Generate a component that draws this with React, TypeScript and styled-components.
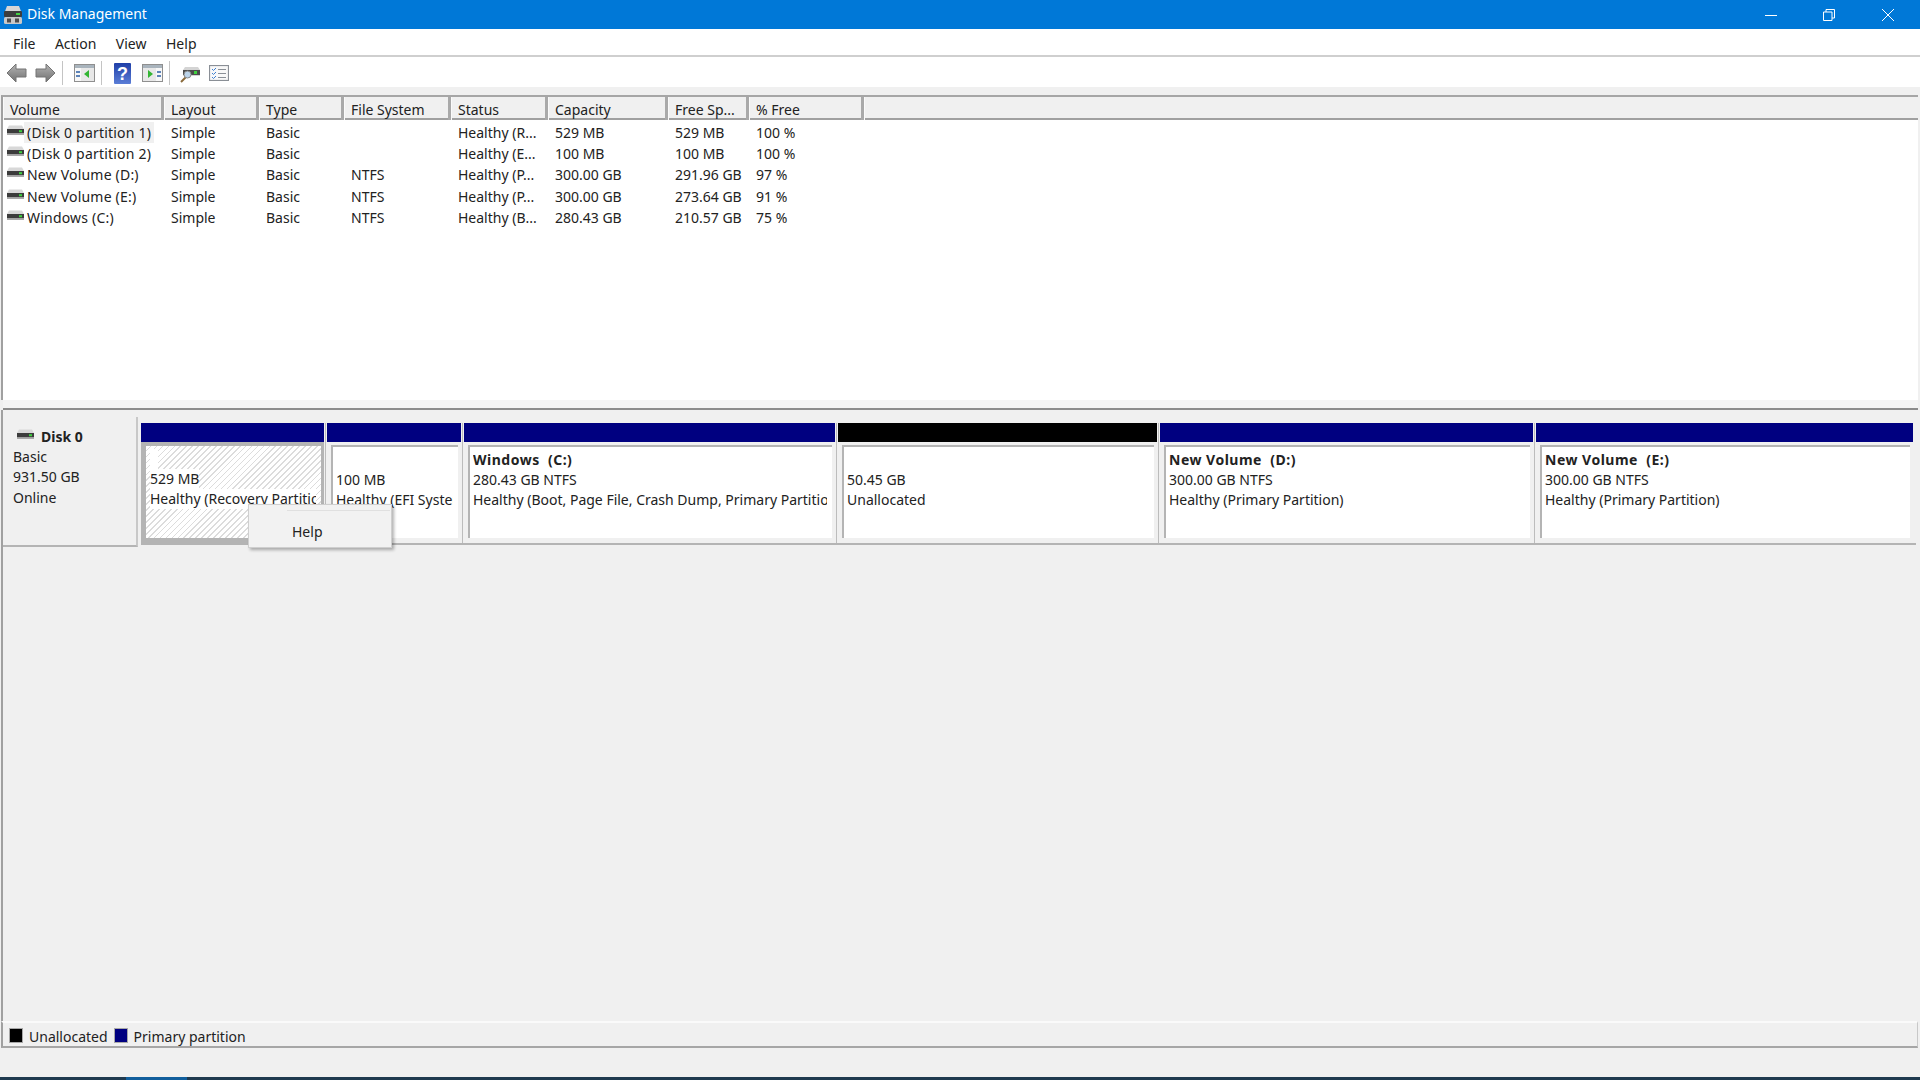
import styled, { createGlobalStyle } from "styled-components";

const GlobalStyle = createGlobalStyle`
  html, body {
    margin: 0;
    padding: 0;
    height: 100%;
    overflow: hidden;
    background: #f0f0f0;
  }
  #root {
    height: 100%;
  }
  * {
    box-sizing: border-box;
  }
`;

const Page = styled.div`
  display: flex;
  flex-direction: column;
  width: 1920px;
  height: 1080px;
  font-family: "Noto Sans", "Open Sans", sans-serif;
  font-size: 14px;
  color: #222;
  background: #f0f0f0;
`;

const TitleBar = styled.div`
  display: flex;
  align-items: center;
  height: 29px;
  flex: none;
  padding: 0 3px 0 3px;
  background: #0078d7;
  color: #fff;
  font-size: 14px;
`;

const TitleText = styled.span`
  flex: 1;
  margin: -2px 0 0 4px;
`;

const WindowButton = styled.div`
  display: flex;
  align-items: center;
  justify-content: center;
  width: 58.5px;
  height: 29px;
`;

const MenuBar = styled.div`
  display: flex;
  align-items: center;
  gap: 19.5px;
  height: 28px;
  flex: none;
  padding: 3px 0 0 13px;
  background: #fff;
  border-bottom: 2px solid #cfcfcf;
`;

const MenuItem = styled.span`
  color: #222;
`;

const Toolbar = styled.div`
  display: flex;
  align-items: center;
  height: 30px;
  flex: none;
  padding: 2px 0 0 6px;
  background: #fff;
`;

const ToolIcon = styled.div<{ $mr: number }>`
  display: flex;
  margin-right: ${(p) => p.$mr}px;
`;

const ToolSep = styled.div<{ $mr: number }>`
  width: 1px;
  height: 24px;
  background: #c4c4c4;
  margin-right: ${(p) => p.$mr}px;
`;

const ToolGap = styled.div`
  height: 8px;
  flex: none;
  background: #f0f0f0;
`;

const ListPane = styled.div`
  height: 305px;
  flex: none;
  margin-left: 1px;
  margin-right: 2px;
  background: #fff;
  border-top: 2px solid #a6a6a6;
  border-left: 2px solid #a0a0a0;
`;

const columns = "161px 95px 85px 107px 97px 120px 81px 115px 1fr";

const HeaderRow = styled.div`
  display: grid;
  grid-template-columns: ${columns};
  height: 23px;
  background: #f0f0f0;
  border-bottom: 2px solid #a0a0a0;
`;

const HeaderCell = styled.div`
  padding: 3px 0 0 6px;
  line-height: 20px;
  border-right: 3px solid #a9a9a9;
  border-left: 1px solid #fafafa;
  white-space: nowrap;
`;

const HeaderFill = styled.div`
  border-left: 1px solid #fafafa;
`;

const Rows = styled.div`
  padding-top: 2px;
`;

const Row = styled.div`
  display: grid;
  grid-template-columns: ${columns};
  height: 21.2px;
  line-height: 21px;
`;

const Cell = styled.div`
  padding-left: 7px;
  white-space: nowrap;
  overflow: hidden;
`;

const VolumeCell = styled.div`
  display: flex;
  align-items: center;
  padding-left: 4px;
  white-space: nowrap;
`;

const VolumeName = styled.span<{ $selected?: boolean }>`
  padding: 0 3px 0 3px;
  height: 21px;
  letter-spacing: 0.2px;
  background: ${(p) => (p.$selected ? "#f0f0f0" : "transparent")};
`;

const RowIcon = styled.div`
  display: flex;
  margin-top: -4px;
`;

const Splitter = styled.div`
  height: 10px;
  flex: none;
  margin-left: 3px;
  margin-right: 2px;
  background: #f4f4f4;
  border-bottom: 2px solid #8c8c8c;
`;

const DiskPane = styled.div`
  position: relative;
  display: flex;
  align-items: flex-start;
  flex: 1;
  margin-left: 1px;
  padding: 7px 4px 0 0;
  border-left: 2px solid #a0a0a0;
`;

const DiskLabel = styled.div`
  display: flex;
  flex-direction: column;
  width: 135px;
  height: 130px;
  flex: none;
  padding: 10px 0 0 10px;
  line-height: 20.2px;
  background: #f0f0f0;
  border-right: 2px solid #c8c8c8;
  border-bottom: 2px solid #b4b4b4;
`;

const DiskName = styled.div`
  display: flex;
  align-items: center;
  gap: 7px;
  margin-left: 4px;
  font-weight: 700;
`;

const DiskIconSlot = styled.div`
  display: flex;
  margin-top: -5px;
`;

const Partitions = styled.div`
  display: flex;
  flex: 1;
  height: 122px;
  margin: 6px 0 0 3px;
  border-bottom: 2px solid #b4b4b4;
`;

const Partition = styled.div<{ $w: number }>`
  display: flex;
  flex-direction: column;
  width: ${(p) => p.$w}px;
  flex: none;
  margin-right: 3px;
  position: relative;
  &:after {
    content: "";
    position: absolute;
    top: 0;
    bottom: 0;
    right: -2px;
    width: 1px;
    background: #bcbcbc;
  }
  &:last-child:after {
    right: -1px;
    background: transparent;
  }
`;

const Bar = styled.div<{ $color: string }>`
  height: 19px;
  flex: none;
  background: ${(p) => p.$color};
`;

const BoxFrame = styled.div<{ $selected?: boolean }>`
  display: flex;
  flex: 1;
  padding: ${(p) => (p.$selected ? "4px 3px 5px 5px" : "3px 3px 5px 4px")};
  background: ${(p) => (p.$selected ? "#b4b4b4" : "#f0f0f0")};
`;

const Box = styled.div<{ $selected?: boolean }>`
  flex: 1;
  min-width: 0;
  padding: ${(p) => (p.$selected ? "3px 5px 0 4px" : "3px 5px 0 3px")};
  line-height: 20px;
  overflow: hidden;
  white-space: pre;
  background: ${(p) =>
    p.$selected
      ? "repeating-linear-gradient(135deg, #fff 0 3px, #dcdcdc 3px 4.2px)"
      : "#fff"};
  border-top: ${(p) => (p.$selected ? "0" : "2px solid #b4b4b4")};
  border-left: ${(p) => (p.$selected ? "0" : "2px solid #b4b4b4")};
`;

const BoxLine = styled.div<{ $bold?: boolean; $hatched?: boolean }>`
  height: 20px;
  overflow: hidden;
  font-weight: ${(p) => (p.$bold ? 700 : 400)};
  letter-spacing: ${(p) => (p.$bold ? "0.5px" : "0")};
  & > span {
    display: inline-block;
    min-width: 8px;
    background: ${(p) => (p.$hatched ? "#fff" : "transparent")};
  }
`;

const ContextMenu = styled.div`
  position: absolute;
  left: 245px;
  top: 94px;
  display: flex;
  width: 144px;
  height: 44px;
  background: #f2f2f2;
  border: 1px solid #cfcfcf;
  box-shadow: 2px 2px 3px rgba(0, 0, 0, 0.3);
`;

const MenuGutter = styled.div`
  width: 38px;
  flex: none;
`;

const MenuLabel = styled.div`
  flex: 1;
  margin: 5px 1px 0 0;
  padding: 11px 0 0 5px;
  line-height: 20px;
  border-top: 1px solid #e0e0e0;
`;

const Legend = styled.div`
  display: flex;
  align-items: center;
  height: 27px;
  flex: none;
  margin: 0 2px 0 1px;
  padding: 1px 0 0 6px;
  background: #f0f0f0;
  border-top: 2px solid #fafafa;
  border-left: 2px solid #a0a0a0;
  border-bottom: 2px solid #a6a6a6;
  border-right: 1px solid #c8c8c8;
`;

const Swatch = styled.div<{ $color: string }>`
  width: 14px;
  height: 15px;
  background: ${(p) => p.$color};
  border: 1px solid #a8a8a8;
`;

const LegendText = styled.span<{ $mr: number }>`
  margin: 3px ${(p) => p.$mr}px 0 6px;
`;

const StatusBar = styled.div`
  height: 29px;
  flex: none;
  background: #f0f0f0;
`;

const Taskbar = styled.div`
  display: flex;
  height: 3px;
  flex: none;
  background: #1f3a4f;
`;

const TaskbarTab = styled.div`
  width: 61px;
  margin-left: 126px;
  background: #115e9c;
`;

type VolumeRow = {
  name: string;
  fs: string;
  status: string;
  capacity: string;
  free: string;
  pct: string;
};

const headers = [
  "Volume",
  "Layout",
  "Type",
  "File System",
  "Status",
  "Capacity",
  "Free Sp...",
  "% Free",
];

const rows: VolumeRow[] = [
  { name: "(Disk 0 partition 1)", fs: "", status: "Healthy (R...", capacity: "529 MB", free: "529 MB", pct: "100 %" },
  { name: "(Disk 0 partition 2)", fs: "", status: "Healthy (E...", capacity: "100 MB", free: "100 MB", pct: "100 %" },
  { name: "New Volume (D:)", fs: "NTFS", status: "Healthy (P...", capacity: "300.00 GB", free: "291.96 GB", pct: "97 %" },
  { name: "New Volume (E:)", fs: "NTFS", status: "Healthy (P...", capacity: "300.00 GB", free: "273.64 GB", pct: "91 %" },
  { name: "Windows (C:)", fs: "NTFS", status: "Healthy (B...", capacity: "280.43 GB", free: "210.57 GB", pct: "75 %" },
];

const partitions = [
  { w: 183, color: "#000080", lines: ["", "529 MB", "Healthy (Recovery Partition)"], selected: true },
  { w: 134, color: "#000080", lines: ["", "100 MB", "Healthy (EFI System Partition)"] },
  { w: 371, color: "#000080", title: "Windows  (C:)", lines: ["280.43 GB NTFS", "Healthy (Boot, Page File, Crash Dump, Primary Partition)"] },
  { w: 319, color: "#000000", lines: ["", "50.45 GB", "Unallocated"] },
  { w: 373, color: "#000080", title: "New Volume  (D:)", lines: ["300.00 GB NTFS", "Healthy (Primary Partition)"] },
  { w: 377, color: "#000080", title: "New Volume  (E:)", lines: ["300.00 GB NTFS", "Healthy (Primary Partition)"] },
];

function DriveIcon() {
  return (
    <svg width="17" height="11" viewBox="0 0 17 11">
      <path d="M2 0.5h13l2 3.5v4H0V4z" fill="#d8d8d8" />
      <rect x="0" y="4" width="17" height="4.5" fill="#3c3c3c" />
      <rect x="0" y="8.5" width="17" height="1.5" fill="#a8a8a8" />
      <rect x="12" y="5.2" width="3" height="2" fill="#3fd23f" />
    </svg>
  );
}

function AppIcon() {
  return (
    <svg width="20" height="20" viewBox="0 0 20 20">
      <path d="M4 1h12l3 8H1z" fill="#d6d6d6" />
      <rect x="1" y="6" width="18" height="6" rx="1" fill="#3d3d3d" />
      <rect x="13" y="8" width="4" height="2" fill="#43d043" />
      <rect x="1" y="12" width="18" height="7" rx="1.5" fill="#c8c8c8" />
      <rect x="4" y="13.5" width="4" height="4" fill="#4d4d4d" />
      <rect x="12" y="13.5" width="4" height="4" fill="#4d4d4d" />
    </svg>
  );
}

function ArrowIcon({ flip }: { flip?: boolean }) {
  const id = flip ? "arrowFwd" : "arrowBack";
  return (
    <svg width="21" height="20" viewBox="0 0 21 20">
      <defs>
        <linearGradient id={id} x1="0" y1="0" x2="0" y2="1">
          <stop offset="0" stopColor="#b4b4b4" />
          <stop offset="1" stopColor="#707070" />
        </linearGradient>
      </defs>
      <path
        d={flip ? "M11 1l9 9-9 9v-5H1V6h10z" : "M10 1L1 10l9 9v-5h10V6H10z"}
        fill={`url(#${id})`}
        stroke="#747474"
      />
    </svg>
  );
}

function PaneIcon({ right }: { right?: boolean }) {
  return (
    <svg width="21" height="18" viewBox="0 0 21 18">
      <rect x="0.5" y="0.5" width="20" height="17" fill="#e8e8e8" stroke="#8f8f8f" />
      <rect x="1" y="1" width="19" height="3" fill="#a9b4bd" />
      <rect x={right ? 14 : 1} y="4" width="6" height="13" fill="#f7f7f7" />
      <rect x={right ? 15 : 2} y="7" width="4" height="2" fill="#5d83b8" />
      <rect x={right ? 15 : 2} y="11" width="4" height="2" fill="#5d83b8" />
      <path d={right ? "M6 6l5 4-5 4z" : "M15 6l-5 4 5 4z"} fill="#33b533" />
    </svg>
  );
}

function HelpIcon() {
  return (
    <svg width="17" height="21" viewBox="0 0 17 21">
      <defs>
        <linearGradient id="helpFill" x1="0" y1="0" x2="0" y2="1">
          <stop offset="0" stopColor="#1f3fa8" />
          <stop offset="1" stopColor="#5a7dd6" />
        </linearGradient>
      </defs>
      <rect width="17" height="21" rx="1" fill="url(#helpFill)" />
      <text
        x="8.5"
        y="16.5"
        textAnchor="middle"
        fontFamily="Liberation Sans, sans-serif"
        fontWeight="700"
        fontSize="18"
        fill="#fff"
      >
        ?
      </text>
    </svg>
  );
}

function DriveSearchIcon() {
  return (
    <svg width="20" height="19" viewBox="0 0 20 19">
      <path d="M5 3h13l2 3v6H3V6z" fill="#d4d4d4" />
      <rect x="3" y="6" width="17" height="5" fill="#4c4c4c" />
      <rect x="14" y="7" width="3" height="3" fill="#3fd23f" />
      <path d="M1 18l5-5" stroke="#8a6a3a" strokeWidth="2" />
      <circle cx="7.5" cy="10.5" r="3.5" fill="#bcd4ea" stroke="#888" />
    </svg>
  );
}

function ChecklistIcon() {
  return (
    <svg width="20" height="16" viewBox="0 0 20 16">
      <rect x="0.5" y="0.5" width="19" height="15" fill="#f8f8f8" stroke="#8a8f96" strokeWidth="1.2" />
      <path d="M3 4l1.5 1.5L7 3M3 8l1.5 1.5L7 7M3 12l1.5 1.5L7 11" fill="none" stroke="#3f7fd0" />
      <path d="M9 4.5h8M9 8.5h8M9 12.5h8" stroke="#8a8f96" />
    </svg>
  );
}

export default function App() {
  return (
    <Page>
      <GlobalStyle />
      <TitleBar>
        <AppIcon />
        <TitleText>Disk Management</TitleText>
        <WindowButton>
          <svg width="12" height="12" viewBox="0 0 12 12">
            <path d="M0 6.5h12" stroke="#fff" strokeWidth="1" />
          </svg>
        </WindowButton>
        <WindowButton>
          <svg width="12" height="12" viewBox="0 0 12 12">
            <path d="M0.5 3h8.5v8.5H0.5z M3 3V0.5h8.5V9H9" fill="none" stroke="#fff" strokeWidth="1" />
          </svg>
        </WindowButton>
        <WindowButton>
          <svg width="12" height="12" viewBox="0 0 12 12">
            <path d="M0 0l12 12M12 0L0 12" stroke="#fff" strokeWidth="1" />
          </svg>
        </WindowButton>
      </TitleBar>
      <MenuBar>
        {["File", "Action", "View", "Help"].map((m) => (
          <MenuItem key={m}>{m}</MenuItem>
        ))}
      </MenuBar>
      <Toolbar>
        <ToolIcon $mr={8}><ArrowIcon /></ToolIcon>
        <ToolIcon $mr={6}><ArrowIcon flip /></ToolIcon>
        <ToolSep $mr={11} />
        <ToolIcon $mr={6}><PaneIcon /></ToolIcon>
        <ToolSep $mr={12} />
        <ToolIcon $mr={11}><HelpIcon /></ToolIcon>
        <ToolIcon $mr={6}><PaneIcon right /></ToolIcon>
        <ToolSep $mr={10} />
        <ToolIcon $mr={9}><DriveSearchIcon /></ToolIcon>
        <ToolIcon $mr={0}><ChecklistIcon /></ToolIcon>
      </Toolbar>
      <ToolGap />
      <ListPane>
        <HeaderRow>
          {headers.map((h) => (
            <HeaderCell key={h}>{h}</HeaderCell>
          ))}
          <HeaderFill />
        </HeaderRow>
        <Rows>
          {rows.map((r, i) => (
            <Row key={r.name}>
              <VolumeCell>
                <RowIcon><DriveIcon /></RowIcon>
                <VolumeName $selected={i === 0}>{r.name}</VolumeName>
              </VolumeCell>
              <Cell>Simple</Cell>
              <Cell>Basic</Cell>
              <Cell>{r.fs}</Cell>
              <Cell>{r.status}</Cell>
              <Cell>{r.capacity}</Cell>
              <Cell>{r.free}</Cell>
              <Cell>{r.pct}</Cell>
            </Row>
          ))}
        </Rows>
      </ListPane>
      <Splitter />
      <DiskPane>
        <DiskLabel>
          <DiskName>
            <DiskIconSlot><DriveIcon /></DiskIconSlot>
            Disk 0
          </DiskName>
          <span>Basic</span>
          <span>931.50 GB</span>
          <span>Online</span>
        </DiskLabel>
        <Partitions>
          {partitions.map((p, i) => (
            <Partition key={i} $w={p.w}>
              <Bar $color={p.color} />
              <BoxFrame $selected={p.selected}>
                <Box $selected={p.selected}>
                  {p.title ? <BoxLine $bold>{p.title}</BoxLine> : null}
                  {p.lines.map((l, j) => (
                    <BoxLine key={j} $hatched={p.selected}>
                      <span>{l || "\u00a0"}</span>
                    </BoxLine>
                  ))}
                </Box>
              </BoxFrame>
            </Partition>
          ))}
        </Partitions>
        <ContextMenu>
          <MenuGutter />
          <MenuLabel>Help</MenuLabel>
        </ContextMenu>
      </DiskPane>
      <Legend>
        <Swatch $color="#000" />
        <LegendText $mr={6}>Unallocated</LegendText>
        <Swatch $color="#000080" />
        <LegendText $mr={0}>Primary partition</LegendText>
      </Legend>
      <StatusBar />
      <Taskbar>
        <TaskbarTab />
      </Taskbar>
    </Page>
  );
}
